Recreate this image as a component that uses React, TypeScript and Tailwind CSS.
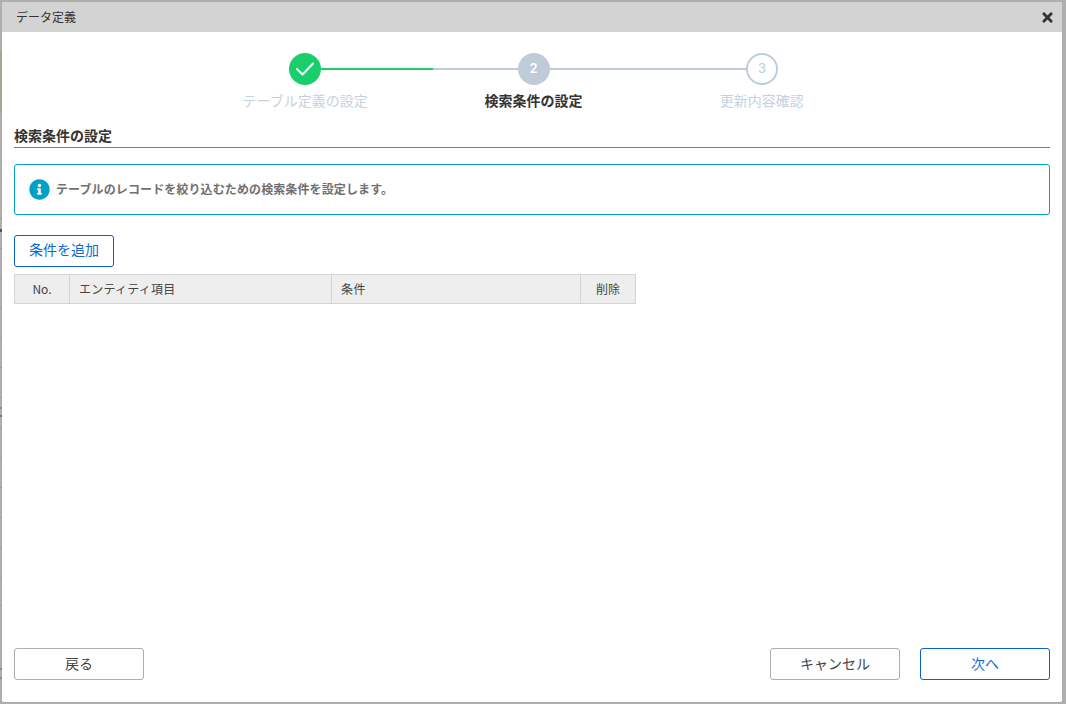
import React from 'react';
import { FaInfoCircle, FaTimes } from 'react-icons/fa';

const jp = 'font-["Noto_Sans_CJK_JP","Liberation_Sans",sans-serif]';

const columns = [
  { label: 'No.', width: 'w-[55px] shrink-0 border-r', align: 'text-center' },
  { label: 'エンティティ項目', width: 'w-[262px] shrink-0 border-r', align: 'text-left pl-[9px] tracking-[0.25px]' },
  { label: '条件', width: 'w-[249px] shrink-0 border-r', align: 'text-left pl-[9px] tracking-[0.5px]' },
  { label: '削除', width: 'flex-1', align: 'text-center' },
];

// page behind the dialog, only its row lines show at the left edge
const backdropTicks = [218, 248, 278, 307, 337, 367, 397, 427, 457, 487, 517, 547, 577, 605];

const App = () => {
  return (
    <div className={`relative h-[704px] w-[1066px] overflow-hidden bg-[#aeaeae] pt-[2px] pl-[2px] pr-[4px] pb-[2px] ${jp}`}>
      <div className="absolute top-[50px] left-0 h-[63px] w-[2px] bg-[#a3a98e]" />
      <div className="absolute top-[229px] left-0 h-[3px] w-[2px] bg-[#555555]" />
      <div className="absolute top-[407px] left-0 h-[2px] w-[2px] bg-[#6a93b0]" />
      <div className="absolute top-[415px] left-0 h-[2px] w-[2px] bg-[#7a7a5a]" />
      <div className="absolute top-[668px] left-0 h-[2px] w-[2px] bg-[#8f8f70]" />
      <div className="absolute top-[677px] left-0 h-[2px] w-[2px] bg-[#8f8f70]" />
      {backdropTicks.map((y) => (
        <div key={y} className="absolute left-0 h-px w-[2px] bg-[#9c9c9c]" style={{ top: y }} />
      ))}

      <div className="relative flex h-[700px] flex-col overflow-hidden rounded-[2px] bg-white">
        <div className="flex h-[30px] items-center justify-between bg-[#d3d3d3] pl-[14px] pr-[9px]">
          <span className="text-[12px] text-[#333333]">データ定義</span>
          <FaTimes className="h-[15px] w-[11px] text-[#333333]" />
        </div>

        <div className="flex flex-col items-center pt-[21px] pl-[3px]">
          <div className="flex items-center">
            <div className="flex h-8 w-8 items-center justify-center rounded-full bg-[#19cf6b]">
              <svg width="20" height="16" viewBox="0 0 20 16" fill="none">
                <path d="M2 8 L7.5 13.5 L18 2.5" stroke="white" strokeWidth="2" strokeLinecap="round" strokeLinejoin="round" />
              </svg>
            </div>
            <div className="h-[2px] w-[112px] bg-[#19cf6b]" />
            <div className="h-[2px] w-[85px] bg-[#c0cbda]" />
            <div className="flex h-8 w-8 items-center justify-center rounded-full bg-[#c0cbda] pr-px text-[13px] font-semibold text-white">
              <span className='font-["Inter",sans-serif]'>2</span>
            </div>
            <div className="h-[2px] w-[196px] bg-[#c0cbda]" />
            <div className="flex h-8 w-8 items-center justify-center rounded-full border-2 border-[#c0cbda] text-[13px] text-[#c0cbda]">
              <span className='font-["Inter",sans-serif]'>3</span>
            </div>
          </div>
          <div className="mt-[5px] grid w-[685px] grid-cols-3 text-center text-[14px] leading-[20px]">
            <span className="text-[#c7d1de]">テーブル定義の設定</span>
            <span className="font-bold text-[#333333]">検索条件の設定</span>
            <span className="text-[#c7d1de]">更新内容確認</span>
          </div>
        </div>

        <div className="flex flex-1 flex-col px-3 pb-[22px]">
          <div className="mt-[15px] border-b border-[#6f8a4a] pb-[2px] text-[14px] leading-[20px] font-bold text-[#333333]">
            検索条件の設定
          </div>

          <div className="mt-[16px] flex h-[51px] items-center gap-[6px] rounded-[3px] border border-[#00a0c8] pl-[14px]">
            <FaInfoCircle className="h-[21px] w-[21px] text-[#00a0c8]" />
            <span className="pb-[2px] text-[12px] font-bold tracking-[0.11px] text-[#707070]">
              テーブルのレコードを絞り込むための検索条件を設定します。
            </span>
          </div>

          <button className="mt-5 h-8 w-[100px] rounded-[3px] border border-[#0862c8] bg-white pb-1 text-[14px] text-[#0a6bd0]">
            条件を追加
          </button>

          <div className="mt-[7px] flex h-[30px] w-[622px] border border-[#d4d4d4] bg-[#eeeeee] text-[12px] text-[#444444]">
            {columns.map((col) => (
              <div key={col.label} className={`${col.width} ${col.align} border-[#d4d4d4] leading-[27px]`}>
                {col.label}
              </div>
            ))}
          </div>

          <div className="mt-auto flex items-center justify-between text-[14px]">
            <button className="h-8 w-[130px] rounded-[3px] border border-[#aeaeae] bg-white pb-[2px] text-[#444444]">戻る</button>
            <div className="flex gap-5">
              <button className="h-8 w-[130px] rounded-[3px] border border-[#aeaeae] bg-white pb-[2px] text-[#444444]">キャンセル</button>
              <button className="h-8 w-[130px] rounded-[3px] border border-[#0862c8] bg-white pb-[2px] text-[#0a6bd0]">次へ</button>
            </div>
          </div>
        </div>
      </div>
    </div>
  );
};

export default App;
